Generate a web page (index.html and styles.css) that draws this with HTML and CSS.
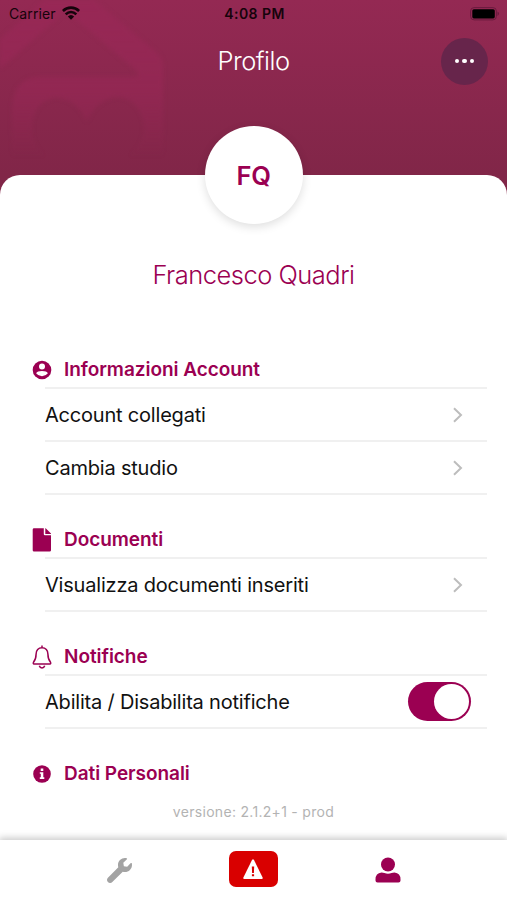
FILE: index.html
```html
<!DOCTYPE html>
<html lang="it">
<head>
<meta charset="utf-8">
<title>Profilo</title>
<link rel="stylesheet" href="styles.css">
</head>
<body>
<div class="app">
  <header class="header">
    <svg class="watermark" width="180" height="175" viewBox="0 0 180 175" aria-hidden="true">
      <defs>
        <linearGradient id="fade" x1="0" y1="0" x2="0" y2="175" gradientUnits="userSpaceOnUse">
          <stop offset="0" stop-color="#9b2858" stop-opacity=".6"/>
          <stop offset=".5" stop-color="#9b2858" stop-opacity=".5"/>
          <stop offset=".9" stop-color="#9b2858" stop-opacity="0"/>
        </linearGradient>
      </defs>
      <path fill="url(#fade)" fill-rule="evenodd" d="M-5 44L50 -5H88L156 52Q163 58 163 66V175H12V110Q13 78 38 77H133Q143 77 136 70L70 14Q66 10 61 15L-5 73ZM87 122C81 106 68 97 55 98C38 100 31 115 32 132C34 150 50 163 87 185C124 163 142 148 144 131C145 113 135 99 119 97C105 97 93 106 87 122Z"/>
    </svg>
    <div class="status">
      <div class="carrier"><span>Carrier</span>
        <svg width="18" height="14" viewBox="0 0 18 14" fill="none" stroke="#16030b" stroke-width="2.6"><path d="M.9 5C5.4.5 12.6.5 17.1 5M3.7 8.3C6.800 5.2 11.2 5.2 14.3 8.300"/><path fill="#16030b" stroke="none" d="M5.800 10.4Q9 7.4 12.2 10.4L9 13.800Z"/></svg>
      </div>
      <div class="clock">4:08 PM</div>
      <svg class="battery" width="30" height="14" viewBox="0 0 30 14"><rect x=".6" y=".6" width="25.800" height="12.3" rx="3.5" fill="none" stroke="#6b1a3e"/><rect x="2.3" y="2.2" width="22.5" height="9.2" rx="1.6" fill="#000"/><path d="M27.500 4.6Q30.600 6.800 27.500 9Z" fill="#6b1a3e"/></svg>
    </div>
    <div class="title-bar">
      <h1 class="title">Profilo</h1>
      <button class="more" aria-label="Menu"><i></i><i></i><i></i></button>
    </div>
  </header>

  <main class="sheet">
    <div class="avatar"><span>FQ</span></div>
    <h2 class="name"><span>Francesco Quadri</span></h2>

    <section class="section">
      <h3 class="head"><svg width="20" height="24" viewBox="0 0 20 24"><circle cx="10" cy="12" r="9.3" fill="#9b0052"/><circle cx="10" cy="8.6" r="3" fill="#fff"/><path d="M4.1 15.3Q5.3 13 10 13T15.9 15.3Q13.8 18.2 10 18.2T4.1 15.3Z" fill="#fff"/></svg><span class="h-info">Informazioni Account</span></h3>
      <div class="row"><span class="t-account">Account collegati</span><svg class="chevron" width="12" height="18" viewBox="0 0 12 18"><path d="M2 2.2L9 9L2 15.8"/></svg></div>
      <div class="row"><span class="t-studio">Cambia studio</span><svg class="chevron" width="12" height="18" viewBox="0 0 12 18"><path d="M2 2.2L9 9L2 15.8"/></svg></div>
    </section>

    <section class="section">
      <h3 class="head"><svg width="20" height="24" viewBox="0 0 20 24" fill="#9b0052"><path d="M2 .3H11.8V6.2Q11.8 7.3 12.9 7.3H19V22.2Q19 23.6 17.6 23.6H2Q.7 23.6.7 22.2V1.6Q.7.3 2 .3ZM13.3.3H13.7L19 5.5V5.9H13.3Z"/></svg><span>Documenti</span></h3>
      <div class="row"><span>Visualizza documenti inseriti</span><svg class="chevron" width="12" height="18" viewBox="0 0 12 18"><path d="M2 2.2L9 9L2 15.8"/></svg></div>
    </section>

    <section class="section">
      <h3 class="head"><svg width="20" height="24" viewBox="0 0 20 24" fill="none" stroke="#9b0052" stroke-width="1.5" stroke-linejoin="round"><path d="M10 .6V2.8M10 2.8C6.3 2.8 4.1 5.2 4.1 9C4.1 13.4 3.2 15.2 1.5 17.2Q.9 18.9 2 18.9H18Q19.1 18.9 18.5 17.2C16.8 15.2 15.9 13.4 15.9 9C15.9 5.2 13.7 2.8 10 2.8ZM7.3 20.8Q8 23 10 23T12.7 20.8"/></svg><span>Notifiche</span></h3>
      <div class="row"><span>Abilita / Disabilita notifiche</span><div class="toggle" role="switch" aria-checked="true"><div class="knob"></div></div></div>
    </section>

    <section class="section">
      <h3 class="head last"><svg width="20" height="24" viewBox="0 0 20 24"><circle cx="10" cy="12" r="8.8" fill="#9b0052"/><path fill="#fff" d="M8.7 6.6H11.3V8.9H8.7ZM7.8 10.2H11.3V15.3H12.3V17H7.8V15.3H8.8V11.8H7.8Z"/></svg><span>Dati Personali</span></h3>
    </section>
    <p class="version"><span>versione: 2.1.2+1 - prod</span></p>
  </main>

  <nav class="nav">
    <div class="tab"><svg width="25" height="25" viewBox="0 0 512 512" fill="#a3a3a3"><path d="M507.7 109.1c-2.2-9-13.5-12.1-20.1-5.5l-74.4 74.4-67.9-11.3L334 98.9l74.4-74.4c6.6-6.6 3.4-17.9-5.7-20.2-47.4-11.7-99.6.9-136.6 37.9-39.6 39.6-50.5 97.1-34.1 147.2L18.7 402.8c-25 25-25 65.5 0 90.5s65.5 25 90.5 0l213.2-213.2c50.1 16.7 107.5 5.7 147.4-34.2 37.1-37.1 49.7-89.3 37.900-136.800z"/></svg></div>
    <div class="tab"><div class="alert"><svg width="20" height="20" viewBox="0 0 20 20"><path d="M9 1.1Q10 -.6 11 1.1L19.6 18.5Q20.1 20 18.7 20H1.3Q-.1 20 .4 18.5Z" fill="#fff"/><path d="M8.8 7.5H11.2L10.9 14H9.1ZM8.9 15.2H11.1V17.3H8.9Z" fill="#d90000"/></svg></div></div>
    <div class="tab person"><svg width="26" height="26" viewBox="0 0 26 26" fill="#9b0052"><circle cx="13" cy="7.5" r="7"/><path d="M6.5 15.6Q8.2 15.6 9.4 16.1Q13 17.6 16.600 16.1Q17.800 15.6 19.5 15.6Q25.5 16.200 25.5 22.5V23.500Q25.5 25.5 23.5 25.5H2.5Q.5 25.5.5 23.5V22.5Q.5 16.200 6.5 15.6Z"/></svg></div>
  </nav>
</div>
</body>
</html>
```
FILE: styles.css
```css
* { box-sizing: border-box; }
body { margin: 0; font-family: Inter, "Liberation Sans", sans-serif; color: #111; background: #fff; }
h1, h2, h3, p { margin: 0; }
svg { display: block; flex: none; }
.app { width: 507px; height: 900px; display: flex; flex-direction: column; overflow: hidden; }

.header { position: relative; height: 200px; flex: none; background: linear-gradient(#942953 0, #812648 175px); }
.watermark { position: absolute; left: 0; top: 0; filter: blur(2px); }
.status { position: relative; height: 27px; padding: 0 7px 0 9px; display: grid; grid-template-columns: 1fr auto 1fr; align-items: center; color: #16030b; font-size: 14px; line-height: 27px; }
.carrier { display: flex; align-items: center; gap: 6px; letter-spacing: .1px; }
.carrier svg { margin-top: -1px; }
.clock { font-weight: 600; letter-spacing: .45px; }
.battery { justify-self: end; }
.title-bar { position: relative; height: 68px; display: grid; grid-template-columns: 1fr auto 1fr; align-items: center; padding-right: 19px; padding-left: 19px; }
.title { grid-column: 2; font-size: 25.5px; line-height: 30px; margin-top: -1px; font-weight: 300; color: #fff; letter-spacing: -.5px; }
.more { justify-self: end; width: 47px; height: 47px; padding: 0; border: 0; border-radius: 50%; background: #67254b; display: flex; align-items: center; justify-content: center; gap: 3px; }
.more i { width: 4.6px; height: 4.6px; flex: none; border-radius: 50%; background: #fff; }

.sheet { position: relative; margin-top: -25px; height: 665px; flex: none; border-radius: 20px 20px 0 0; background: #fff; display: flex; flex-direction: column; }
.avatar { width: 98px; height: 98px; margin: -49px auto 0; flex: none; border-radius: 50%; background: #fff; box-shadow: 0 3px 10px rgba(0,0,0,.13); display: flex; align-items: center; justify-content: center; color: #9b0052; font-size: 25.5px; font-weight: 600; letter-spacing: -.3px; }
.name { height: 40px; margin: 31px 0 57px; text-align: center; font-size: 25.5px; line-height: 40px; font-weight: 300; color: #9b0052; letter-spacing: -.5px; }
.section { margin-bottom: 27px; padding: 0 20px 0 45px; }
.head { height: 37px; border-bottom: 2px solid #f0f0f0; display: flex; align-items: center; gap: 12px; font-size: 19px; font-weight: 600; letter-spacing: -.05px; color: #9b0052; }
.head svg { margin-left: -13px; }
.head.last { border-bottom: 0; padding-bottom: 2px; }
.row { height: 53px; border-bottom: 2px solid #f0f0f0; padding-right: 23px; display: flex; align-items: center; justify-content: space-between; font-size: 20px; letter-spacing: -.2px; }
.chevron { fill: none; stroke: #bdbdbd; stroke-width: 2; }
.toggle { width: 63px; height: 39px; margin-right: -7px; padding: 2px; border-radius: 20px; background: #9b0052; display: flex; justify-content: flex-end; }
.knob { width: 35px; height: 35px; border-radius: 50%; background: #fff; }
.version { margin-top: -18px; text-align: center; font-size: 14px; line-height: 20px; color: #b3b3b3; letter-spacing: .3px; }

.nav { position: relative; height: 60px; flex: none; padding: 0 53px; display: grid; grid-template-columns: repeat(3, 1fr); background: #fff; box-shadow: 0 -1px 7px 1px rgba(0,0,0,.22); }
.tab { display: flex; align-items: center; justify-content: center; }
.tab.person { padding-left: 2px; }
.alert { width: 49px; height: 36px; margin-top: -2px; border-radius: 7px; background: #d90000; display: flex; align-items: center; justify-content: center; }
```
